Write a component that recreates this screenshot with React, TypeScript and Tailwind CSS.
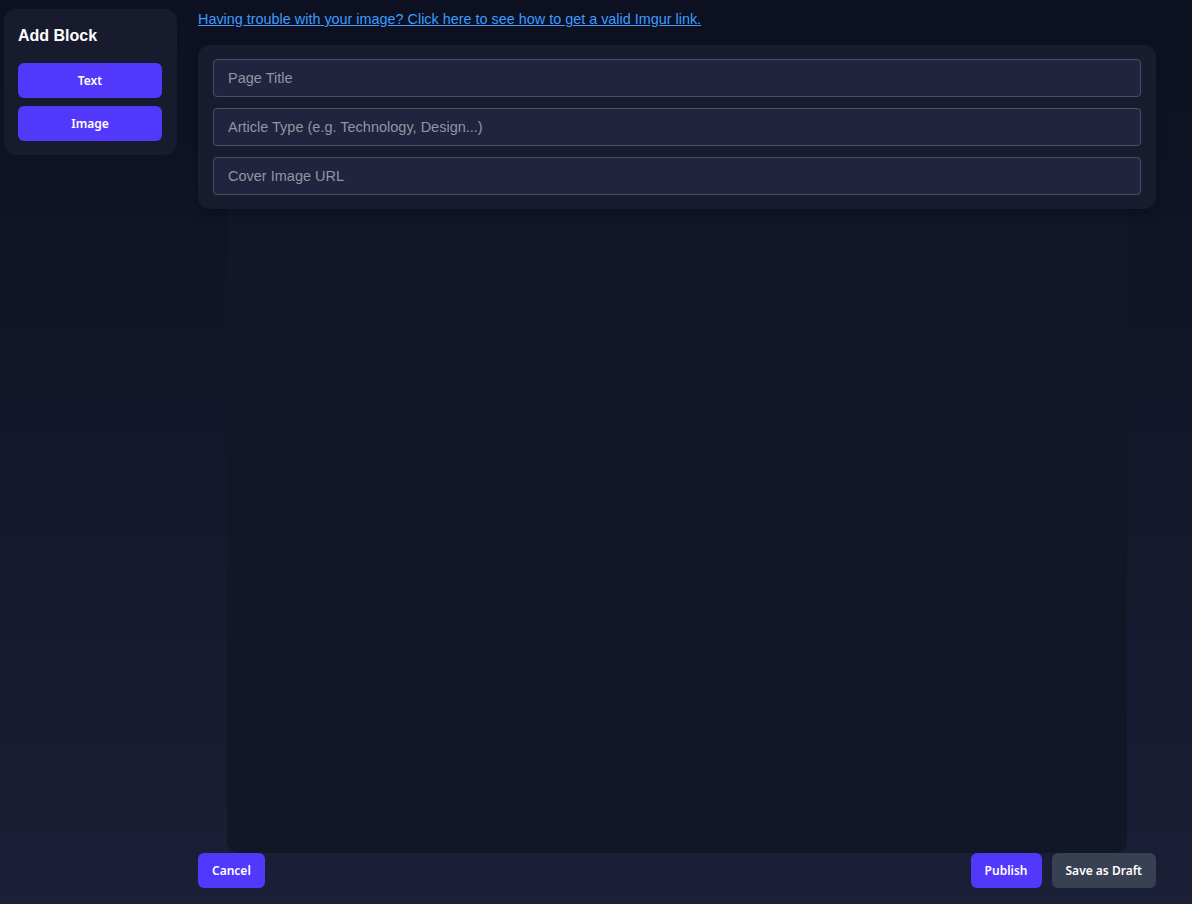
import { useState } from 'react';

const fields = [
  { key: 'title', placeholder: 'Page Title' },
  { key: 'type', placeholder: 'Article Type (e.g. Technology, Design...)' },
  { key: 'cover', placeholder: 'Cover Image URL' },
];

export default function App() {
  const [values, setValues] = useState<Record<string, string>>({});

  return (
    <div className="min-h-[904px] bg-gradient-to-b from-[#0c1020] to-[#1b1f37] flex font-['Liberation_Sans',Arial,sans-serif]">
      {/* Block palette */}
      <aside className="ml-1 mt-[9px] w-[173px] self-start rounded-xl bg-[#171b2d] pl-[14px] pr-[15px] pt-[17px] pb-[14px]">
        <h2 className="text-white text-base font-bold leading-[20px] mb-[17px]">Add Block</h2>
        <div className="flex flex-col gap-2">
          {['Text', 'Image'].map((label) => (
            <button
              key={label}
              className="h-[35px] rounded-md bg-[#5238fb] text-white text-[12px] font-semibold font-['Noto_Sans',sans-serif]"
            >
              {label}
            </button>
          ))}
        </div>
      </aside>

      {/* Editor column */}
      <main className="ml-[21px] mr-9 flex-1 flex flex-col pt-[9px] pb-4">
        <a href="#" className="text-[14.4px] leading-[20px] text-[#3c9cff] underline self-start">
          Having trouble with your image? Click here to see how to get a valid Imgur link.
        </a>

        <div className="relative z-10 mt-[16px] rounded-xl bg-[#181c2f] px-[15px] py-[14px] flex flex-col gap-[11px] shadow-[0_4px_10px_rgba(0,0,0,0.25)]">
          {fields.map((f) => (
            <input
              key={f.key}
              value={values[f.key] ?? ''}
              onChange={(e) => setValues({ ...values, [f.key]: e.target.value })}
              placeholder={f.placeholder}
              className="h-[38px] w-full rounded border border-[#4a5062] bg-[#20243e] px-[14px] text-[14.5px] text-gray-200 placeholder:text-[#9096a4] outline-none"
            />
          ))}
        </div>

        <div className="mx-auto -mt-2 w-[900px] h-[652px] rounded-b-xl bg-[#111727]" />

        <div className="flex items-center font-['Noto_Sans',sans-serif] text-[12px] font-semibold text-white">
          <button className="h-[35px] px-[14px] rounded-md bg-[#5238fb]">Cancel</button>
          <div className="ml-auto flex gap-[10px]">
            <button className="h-[35px] px-[14px] rounded-md bg-[#5238fb]">Publish</button>
            <button className="h-[35px] px-[14px] rounded-md bg-[#374151]">Save as Draft</button>
          </div>
        </div>
      </main>
    </div>
  );
}
